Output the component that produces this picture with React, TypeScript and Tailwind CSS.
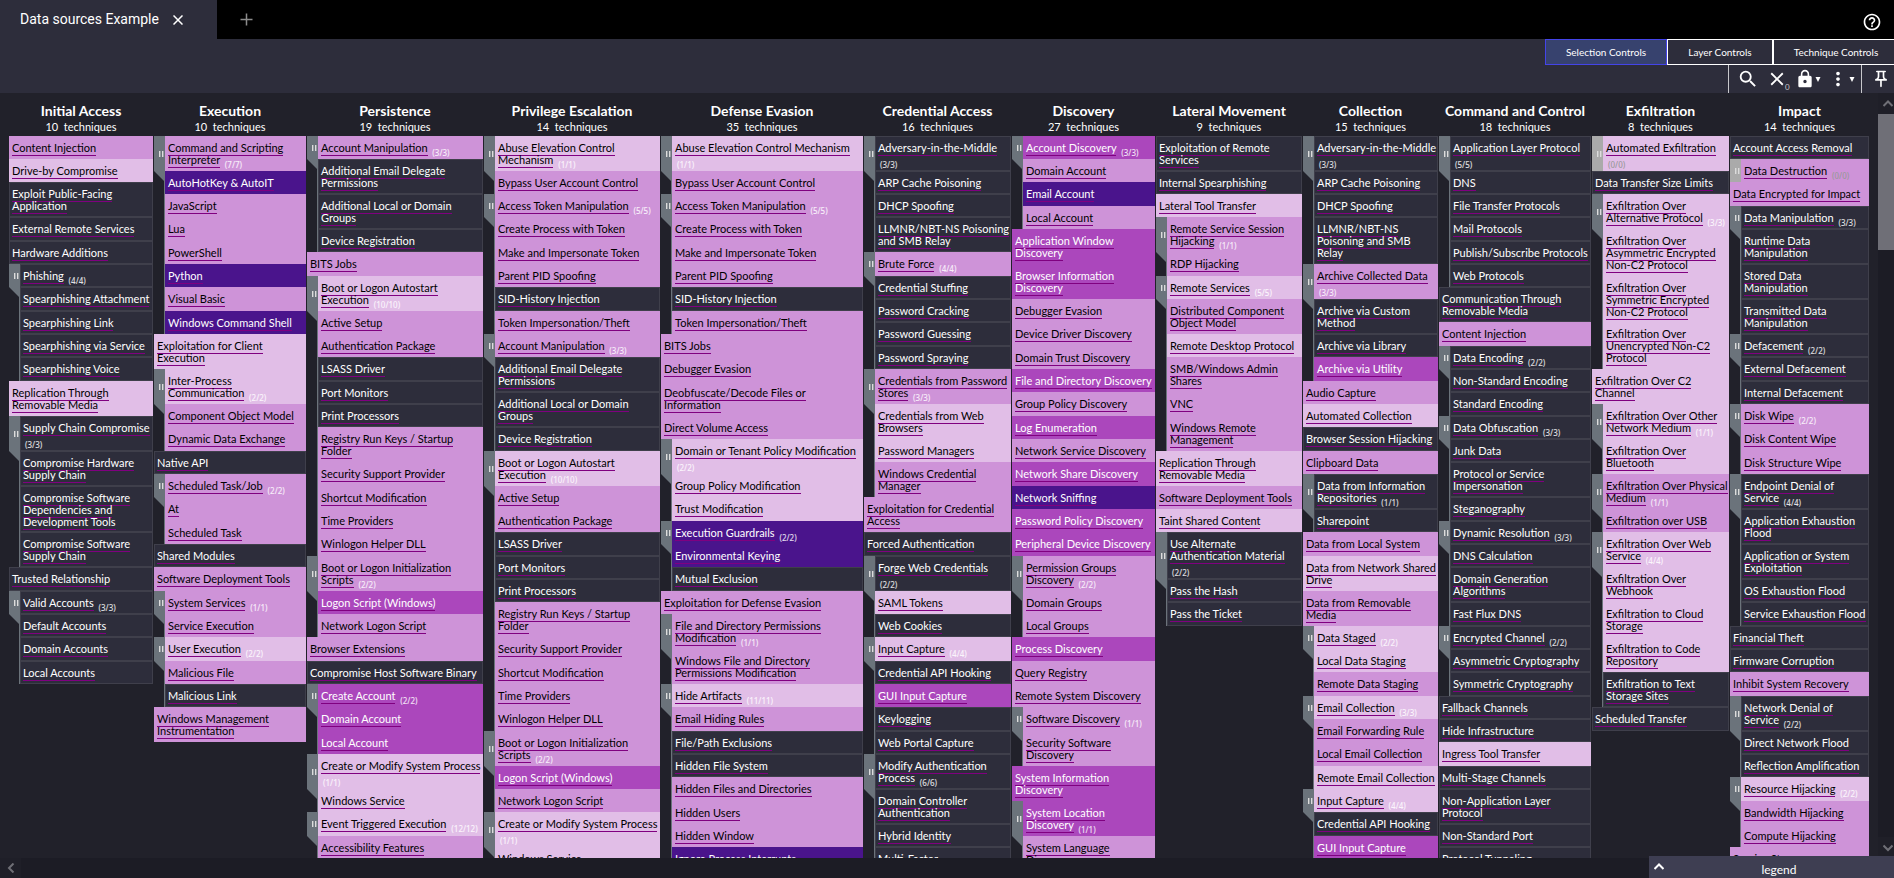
import React from "react";

type Level = "none" | "light" | "medium" | "strong" | "deep";

interface Technique {
  level: Level;
  lines: string[];
  count?: string;
  subs: Technique[];
}

interface Tactic {
  name: string;
  total: number;
  width: string;
  techniques: Technique[];
}

const LEVELS: Record<string, Level> = { n: "none", l: "light", m: "medium", s: "strong", d: "deep" };

/* One technique per row: a level letter, the name with "|" for a line break,
   and "#" before the sub-technique count. Rows that start with "-" are
   sub-techniques of the row above. */
function parse(source: string): Technique[] {
  const result: Technique[] = [];
  source
    .trim()
    .split("\n")
    .forEach((raw) => {
      const row = raw.trim();
      const isSub = row.startsWith("-");
      const body = isSub ? row.slice(1) : row;
      const [label, count] = body.slice(2).split("#");
      const technique: Technique = {
        level: LEVELS[body[0]],
        lines: label.split("|"),
        count,
        subs: [],
      };
      if (isSub) result[result.length - 1].subs.push(technique);
      else result.push(technique);
    });
  return result;
}

const AUTOSTART = `
l Boot or Logon Autostart|Execution#10/10
-m Active Setup
-m Authentication Package
-n LSASS Driver
-n Port Monitors
-n Print Processors
-m Registry Run Keys / Startup|Folder
-m Security Support Provider
-m Shortcut Modification
-m Time Providers
-m Winlogon Helper DLL
m Boot or Logon Initialization|Scripts#2/2
-s Logon Script (Windows)
-m Network Logon Script`;

const ACCOUNT_MANIPULATION = `
m Account Manipulation#3/3
-n Additional Email Delegate|Permissions
-n Additional Local or Domain|Groups
-n Device Registration`;

const ACCESS_TOKEN = `
m Access Token Manipulation#5/5
-m Create Process with Token
-m Make and Impersonate Token
-m Parent PID Spoofing
-n SID-History Injection
-m Token Impersonation/Theft`;

const TACTICS: Tactic[] = [
  {
    name: "Initial Access",
    total: 10,
    width: "flex-[144_0_144px]",
    techniques: parse(`
m Content Injection
l Drive-by Compromise
n Exploit Public-Facing|Application
n External Remote Services
n Hardware Additions
n Phishing#4/4
-n Spearphishing Attachment
-n Spearphishing Link
-n Spearphishing via Service
-n Spearphishing Voice
l Replication Through|Removable Media
n Supply Chain Compromise|#3/3
-n Compromise Hardware|Supply Chain
-n Compromise Software|Dependencies and|Development Tools
-n Compromise Software|Supply Chain
n Trusted Relationship
n Valid Accounts#3/3
-n Default Accounts
-n Domain Accounts
-n Local Accounts`),
  },
  {
    name: "Execution",
    total: 10,
    width: "flex-[152_0_152px]",
    techniques: parse(`
m Command and Scripting|Interpreter#7/7
-d AutoHotKey & AutoIT
-m JavaScript
-m Lua
-m PowerShell
-d Python
-m Visual Basic
-d Windows Command Shell
l Exploitation for Client|Execution
l Inter-Process|Communication#2/2
-m Component Object Model
-m Dynamic Data Exchange
n Native API
m Scheduled Task/Job#2/2
-m At
-m Scheduled Task
n Shared Modules
m Software Deployment Tools
m System Services#1/1
-m Service Execution
l User Execution#2/2
-m Malicious File
-n Malicious Link
m Windows Management|Instrumentation`),
  },
  {
    name: "Persistence",
    total: 19,
    width: "flex-[176_0_176px]",
    techniques: parse(`${ACCOUNT_MANIPULATION}
m BITS Jobs${AUTOSTART}
m Browser Extensions
n Compromise Host Software Binary
s Create Account#2/2
-s Domain Account
-s Local Account
l Create or Modify System Process|#1/1
-l Windows Service
l Event Triggered Execution#12/12
-m Accessibility Features`),
  },
  {
    name: "Privilege Escalation",
    total: 14,
    width: "flex-[176_0_176px]",
    techniques: parse(`
l Abuse Elevation Control|Mechanism#1/1
-m Bypass User Account Control${ACCESS_TOKEN}${ACCOUNT_MANIPULATION}${AUTOSTART}
l Create or Modify System Process|#1/1
-l Windows Service`),
  },
  {
    name: "Defense Evasion",
    total: 35,
    width: "flex-[202_0_202px]",
    techniques: parse(`
l Abuse Elevation Control Mechanism|#1/1
-m Bypass User Account Control${ACCESS_TOKEN}
m BITS Jobs
m Debugger Evasion
m Deobfuscate/Decode Files or|Information
m Direct Volume Access
l Domain or Tenant Policy Modification|#2/2
-l Group Policy Modification
-l Trust Modification
d Execution Guardrails#2/2
-d Environmental Keying
-n Mutual Exclusion
m Exploitation for Defense Evasion
m File and Directory Permissions|Modification#1/1
-m Windows File and Directory|Permissions Modification
l Hide Artifacts#11/11
-m Email Hiding Rules
-n File/Path Exclusions
-n Hidden File System
-m Hidden Files and Directories
-m Hidden Users
-m Hidden Window
-d Ignore Process Interrupts`),
  },
  {
    name: "Credential Access",
    total: 16,
    width: "flex-[147_0_147px]",
    techniques: parse(`
n Adversary-in-the-Middle|#3/3
-n ARP Cache Poisoning
-n DHCP Spoofing
-n LLMNR/NBT-NS Poisoning|and SMB Relay
m Brute Force#4/4
-n Credential Stuffing
-n Password Cracking
-n Password Guessing
-n Password Spraying
m Credentials from Password|Stores#3/3
-l Credentials from Web|Browsers
-l Password Managers
-m Windows Credential|Manager
m Exploitation for Credential|Access
n Forced Authentication
n Forge Web Credentials|#2/2
-l SAML Tokens
-n Web Cookies
l Input Capture#4/4
-n Credential API Hooking
-s GUI Input Capture
-n Keylogging
-n Web Portal Capture
n Modify Authentication|Process#6/6
-n Domain Controller|Authentication
-n Hybrid Identity
-n Multi-Factor|Authentication`),
  },
  {
    name: "Discovery",
    total: 27,
    width: "flex-[143_0_143px]",
    techniques: parse(`
s Account Discovery#3/3
-m Domain Account
-d Email Account
-m Local Account
s Application Window|Discovery
s Browser Information|Discovery
m Debugger Evasion
m Device Driver Discovery
m Domain Trust Discovery
s File and Directory Discovery
m Group Policy Discovery
s Log Enumeration
m Network Service Discovery
s Network Share Discovery
d Network Sniffing
s Password Policy Discovery
s Peripheral Device Discovery
m Permission Groups|Discovery#2/2
-m Domain Groups
-m Local Groups
s Process Discovery
m Query Registry
m Remote System Discovery
m Software Discovery#1/1
-m Security Software|Discovery
s System Information|Discovery
s System Location|Discovery#1/1
-m System Language|Discovery`),
  },
  {
    name: "Lateral Movement",
    total: 9,
    width: "flex-[146_0_146px]",
    techniques: parse(`
n Exploitation of Remote|Services
n Internal Spearphishing
l Lateral Tool Transfer
m Remote Service Session|Hijacking#1/1
-m RDP Hijacking
l Remote Services#5/5
-m Distributed Component|Object Model
-l Remote Desktop Protocol
-m SMB/Windows Admin|Shares
-m VNC
-m Windows Remote|Management
l Replication Through|Removable Media
m Software Deployment Tools
l Taint Shared Content
n Use Alternate|Authentication Material|#2/2
-n Pass the Hash
-n Pass the Ticket`),
  },
  {
    name: "Collection",
    total: 15,
    width: "flex-[135_0_135px]",
    techniques: parse(`
n Adversary-in-the-Middle|#3/3
-n ARP Cache Poisoning
-n DHCP Spoofing
-n LLMNR/NBT-NS|Poisoning and SMB|Relay
m Archive Collected Data|#3/3
-n Archive via Custom|Method
-n Archive via Library
-s Archive via Utility
m Audio Capture
l Automated Collection
n Browser Session Hijacking
m Clipboard Data
n Data from Information|Repositories#1/1
-n Sharepoint
m Data from Local System
l Data from Network Shared|Drive
m Data from Removable|Media
l Data Staged#2/2
-l Local Data Staging
-m Remote Data Staging
l Email Collection#3/3
-m Email Forwarding Rule
-m Local Email Collection
-l Remote Email Collection
l Input Capture#4/4
-n Credential API Hooking
-s GUI Input Capture`),
  },
  {
    name: "Command and Control",
    total: 18,
    width: "flex-[152_0_152px]",
    techniques: parse(`
n Application Layer Protocol|#5/5
-n DNS
-n File Transfer Protocols
-n Mail Protocols
-n Publish/Subscribe Protocols
-n Web Protocols
n Communication Through|Removable Media
m Content Injection
n Data Encoding#2/2
-n Non-Standard Encoding
-n Standard Encoding
n Data Obfuscation#3/3
-n Junk Data
-n Protocol or Service|Impersonation
-n Steganography
n Dynamic Resolution#3/3
-n DNS Calculation
-n Domain Generation|Algorithms
-n Fast Flux DNS
n Encrypted Channel#2/2
-n Asymmetric Cryptography
-n Symmetric Cryptography
n Fallback Channels
n Hide Infrastructure
l Ingress Tool Transfer
n Multi-Stage Channels
n Non-Application Layer|Protocol
n Non-Standard Port
n Protocol Tunneling`),
  },
  {
    name: "Exfiltration",
    total: 8,
    width: "flex-[137_0_137px]",
    techniques: parse(`
l Automated Exfiltration|#0/0
n Data Transfer Size Limits
l Exfiltration Over|Alternative Protocol#3/3
-l Exfiltration Over|Asymmetric Encrypted|Non-C2 Protocol
-l Exfiltration Over|Symmetric Encrypted|Non-C2 Protocol
-l Exfiltration Over|Unencrypted Non-C2|Protocol
l Exfiltration Over C2|Channel
l Exfiltration Over Other|Network Medium#1/1
-l Exfiltration Over|Bluetooth
m Exfiltration Over Physical|Medium#1/1
-m Exfiltration over USB
l Exfiltration Over Web|Service#4/4
-l Exfiltration Over|Webhook
-l Exfiltration to Cloud|Storage
-l Exfiltration to Code|Repository
-n Exfiltration to Text|Storage Sites
n Scheduled Transfer`),
  },
  {
    name: "Impact",
    total: 14,
    width: "flex-[139_0_139px]",
    techniques: parse(`
n Account Access Removal
m Data Destruction#0/0
m Data Encrypted for Impact
n Data Manipulation#3/3
-n Runtime Data|Manipulation
-n Stored Data|Manipulation
-n Transmitted Data|Manipulation
n Defacement#2/2
-n External Defacement
-n Internal Defacement
m Disk Wipe#2/2
-m Disk Content Wipe
-m Disk Structure Wipe
n Endpoint Denial of|Service#4/4
-n Application Exhaustion|Flood
-n Application or System|Exploitation
-n OS Exhaustion Flood
-n Service Exhaustion Flood
n Financial Theft
n Firmware Corruption
m Inhibit System Recovery
n Network Denial of|Service#2/2
-n Direct Network Flood
-n Reflection Amplification
l Resource Hijacking#2/2
-m Bandwidth Hijacking
-m Compute Hijacking
m Service Stop`),
  },
];

const CELL: Record<Level, string> = {
  none: "border-[#3f3f4b] bg-[#2d2d3b] text-white",
  light: "border-[#e1bee7] bg-[#e1bee7] text-black",
  medium: "border-[#ce93d8] bg-[#ce93d8] text-black",
  strong: "border-[#ab47bc] bg-[#ab47bc] text-white",
  deep: "border-[#4a148c] bg-[#4a148c] text-white",
};

/* Rows sit on a rhythm in which three half-rows measure 35px. */
const rhythm = (units: number) => Math.floor((units * 35) / 3);

function Cell({ technique, start }: { technique: Technique; start: number }) {
  const { level, lines, count } = technique;
  const minHeight = rhythm(start + lines.length + 1) - rhythm(start);
  return (
    <div
      className={`border px-[2px] pt-[5px] pb-[3px] text-[11px] leading-[12px] whitespace-nowrap ${CELL[level]}`}
      style={{ minHeight }}
    >
      <a href="#technique">
        {lines.map((line, i) => (
          <React.Fragment key={i}>
            {i > 0 && <br />}
            {line && <span className="border-b border-[#800080] pb-px">{line}</span>}
          </React.Fragment>
        ))}
      </a>
      {count && (
        <>
          {" "}
          <span
            className={`ml-[2px] align-[-4px] font-['Noto_Sans',sans-serif] text-[8px] leading-[0] font-medium ${
              count === "0/0" ? "text-[#999999]" : "text-white/85"
            }`}
          >
            ({count})
          </span>
        </>
      )}
    </div>
  );
}

function Group({ technique, start }: { technique: Technique; start: number }) {
  const empty = technique.count === "0/0";
  let offset = start + technique.lines.length + 1;
  return (
    <div className="grid grid-cols-[11px_minmax(0,1fr)]">
      <button
        type="button"
        aria-label="Toggle sub-techniques"
        className={`flex items-center justify-end pr-[1px] ${empty ? "bg-[#aaaaaa]" : "bg-[#6b737b]"}`}
      >
        <svg width="5" height="6" viewBox="0 0 5 6" fill="#dcdcdc">
          <rect x="0" y="0" width="1.4" height="6" />
          <rect x="3" y="0" width="1.4" height="6" />
        </svg>
      </button>
      <Cell technique={technique} start={start} />
      {technique.subs.length > 0 && (
        <>
          <div className="border-r border-[#6b737b]">
            <div className="h-[10px] bg-[#6b737b] [clip-path:polygon(0_0,100%_0,100%_100%)]" />
          </div>
          <div className="flex flex-col">
            {technique.subs.map((sub, i) => {
              const at = offset;
              offset += sub.lines.length + 1;
              return <Cell key={i} technique={sub} start={at} />;
            })}
          </div>
        </>
      )}
    </div>
  );
}

function Column({ tactic }: { tactic: Tactic }) {
  let offset = 0;
  return (
    <section className={`flex min-w-0 flex-col ${tactic.width}`}>
      <header className="flex h-[43px] flex-col items-center pt-[9px] whitespace-nowrap text-white">
        <h2 className="text-[14px] leading-[18px] font-bold">{tactic.name}</h2>
        <p className="text-[11px] leading-[14px] whitespace-pre">{`${tactic.total}  techniques`}</p>
      </header>
      {tactic.techniques.map((technique, i) => {
        const at = offset;
        offset += [technique, ...technique.subs].reduce((sum, t) => sum + t.lines.length + 1, 0);
        return technique.count ? (
          <Group key={i} technique={technique} start={at} />
        ) : (
          <Cell key={i} technique={technique} start={at} />
        );
      })}
    </section>
  );
}

function Chevron({ d }: { d: string }) {
  return (
    <svg width="10" height="10" viewBox="0 0 10 10" fill="none" stroke="currentColor" strokeWidth="2">
      <path d={d} />
    </svg>
  );
}

function Caret() {
  return (
    <svg width="6" height="5" viewBox="0 0 6 5" fill="currentColor" className="shrink-0">
      <path d="M0.500 0h5L3 5z" />
    </svg>
  );
}

function Toolbar() {
  return (
    <div className="flex h-[54px] shrink-0 flex-col items-end bg-[#2d2d3b] text-white">
      <div className="flex h-[26px] text-[10px]">
        <button type="button" className="w-[122px] border border-[#4444e8] bg-[#37426e]">
          Selection Controls
        </button>
        <button type="button" className="w-[106px] border border-white">
          Layer Controls
        </button>
        <button type="button" className="w-[121px] border border-r-0 border-white pl-[4px]">
          Technique Controls
        </button>
      </div>
      <div className="flex h-[28px] items-center">
        <div className="flex h-full items-center border-l border-[#c8c8cc] pl-[8px]">
          <button type="button" aria-label="Search" className="w-[22px]">
            <svg width="22" height="22" viewBox="0 0 24 24" fill="currentColor">
              <path d="M15.500 14h-.790l-.280-.270A6.471 6.471 0 0 0 16 9.500 6.500 6.500 0 1 0 9.500 16c1.610 0 3.090-.590 4.230-1.570l.270.280v.790l5 4.990L20.490 19l-4.990-5zm-6 0C7.010 14 5 11.990 5 9.500S7.010 5 9.500 5 14 7.010 14 9.500 11.990 14 9.500 14z" />
            </svg>
          </button>
          <button type="button" aria-label="Deselect" className="ml-[7px] flex w-[22px] items-end">
            <svg width="22" height="22" viewBox="0 0 24 24" fill="currentColor" className="shrink-0">
              <path d="M19 6.410L17.590 5 12 10.590 6.410 5 5 6.410 10.590 12 5 17.590 6.410 19 12 13.410 17.590 19 19 17.590 13.410 12z" />
            </svg>
            <span className="-ml-[3px] text-[8px] leading-[5px] text-[#c8c8cc]">0</span>
          </button>
          <button type="button" aria-label="Lock" className="ml-[7px] flex w-[25px] items-center">
            <svg width="20" height="20" viewBox="0 0 24 24" fill="currentColor" className="shrink-0">
              <path d="M18 8h-1V6c0-2.760-2.240-5-5-5S7 3.240 7 6v2H6c-1.100 0-2 .9-2 2v10c0 1.100.9 2 2 2h12c1.100 0 2-.9 2-2V10c0-1.100-.9-2-2-2zm-6 9c-1.100 0-2-.9-2-2s.9-2 2-2 2 .9 2 2-.9 2-2 2zm3.100-9H8.900V6c0-1.710 1.390-3.100 3.100-3.100 1.710 0 3.100 1.390 3.100 3.100v2z" />
            </svg>
            <Caret />
          </button>
          <button type="button" aria-label="More" className="ml-[7px] flex w-[29px] items-center">
            <svg width="22" height="22" viewBox="0 0 24 24" fill="currentColor" className="shrink-0">
              <path d="M12 8c1.100 0 2-.9 2-2s-.9-2-2-2-2 .9-2 2 .9 2 2 2zm0 2c-1.100 0-2 .9-2 2s.9 2 2 2 2-.9 2-2-.9-2-2-2zm0 6c-1.100 0-2 .9-2 2s.9 2 2 2 2-.9 2-2-.9-2-2-2z" />
            </svg>
            <Caret />
          </button>
        </div>
        <div className="ml-[5px] flex h-full items-center border-l border-[#c8c8cc] pr-[3px] pl-[9px]">
          <button type="button" aria-label="Pin" className="w-[20px]">
            <svg width="20" height="20" viewBox="0 0 24 24" fill="currentColor">
              <path d="M14 4v5c0 1.120.370 2.160 1 3H9c.650-.860 1-1.900 1-3V4h4m3-2H7c-.550 0-1 .450-1 1s.450 1 1 1h1v5c0 1.660-1.340 3-3 3v2h5.970v7l1 1 1-1v-7H19v-2c-1.660 0-3-1.340-3-3V4h1c.550 0 1-.450 1-1s-.450-1-1-1z" />
            </svg>
          </button>
        </div>
      </div>
    </div>
  );
}

export default function App() {
  return (
    <div className="relative flex h-screen flex-col overflow-hidden bg-[#21212a] font-['Lato','Noto_Sans',sans-serif]">
      <nav className="flex h-[39px] shrink-0 items-stretch bg-black text-white">
        <div className="flex w-[217px] items-center bg-[#2d2d3b] pl-5">
          <button
            type="button"
            className="pb-[2px] font-['Roboto','Liberation_Sans',sans-serif] text-[14px] leading-[18px]"
          >
            Data sources Example
          </button>
          <button type="button" aria-label="Close tab" className="ml-[14px]">
            <svg width="10" height="10" viewBox="0 0 10 10" fill="none" stroke="currentColor" strokeWidth="1.500">
              <path d="M0.500 0.500l9 9M9.500 0.500l-9 9" />
            </svg>
          </button>
        </div>
        <button type="button" aria-label="New tab" className="ml-[23px] text-[#8c8c8c]">
          <svg width="13" height="13" viewBox="0 0 13 13" stroke="currentColor" strokeWidth="1.500">
            <path d="M6.500 0.500v12M0.500 6.500h12" />
          </svg>
        </button>
        <button type="button" aria-label="Help" className="mt-[5px] mr-[12px] ml-auto">
          <svg width="20" height="20" viewBox="0 0 24 24" fill="currentColor">
            <path d="M11 18h2v-2h-2v2zm1-16C6.480 2 2 6.480 2 12s4.480 10 10 10 10-4.480 10-10S17.520 2 12 2zm0 18c-4.410 0-8-3.590-8-8s3.590-8 8-8 8 3.590 8 8-3.590 8-8 8zm0-14c-2.210 0-4 1.790-4 4h2c0-1.100.9-2 2-2s2 .9 2 2c0 2-3 1.750-3 5h2c0-2.250 3-2.500 3-5 0-2.210-1.790-4-4-4z" />
          </svg>
        </button>
      </nav>
      <Toolbar />
      <div className="flex min-h-0 flex-1">
        <main className="flex min-w-0 flex-1 items-start gap-px overflow-hidden px-[9px]">
          {TACTICS.map((tactic) => (
            <Column key={tactic.name} tactic={tactic} />
          ))}
        </main>
        <div className="flex w-4 shrink-0 flex-col items-end bg-[#1c1c25] text-[#6f6f76]">
          <div className="flex h-[21px] w-full items-center justify-end bg-[#1f1f28] pr-px">
            <Chevron d="M0.500 7L5 2.500l4.500 4.500" />
          </div>
          <div className="h-[136px] w-full bg-[#6f6f77]" />
          <div className="mt-auto flex h-[21px] w-full items-center justify-end bg-[#1f1f28] pr-px">
            <Chevron d="M0.500 2.500L5 7l4.500-4.500" />
          </div>
        </div>
      </div>
      <div className="flex h-[20px] shrink-0 items-center bg-[#1c1c25] text-[#6f6f76]">
        <div className="flex h-full w-[21px] items-center justify-center bg-[#1f1f28]">
          <Chevron d="M7.500 0.500L3 5l4.500 4.500" />
        </div>
      </div>
      <button
        type="button"
        className="absolute right-0 bottom-0 flex h-[22px] w-[245px] items-center bg-[#3e3e52] pl-[5px] text-white"
      >
        <Chevron d="M0.500 7L5 2.500l4.500 4.500" />
        <span className="flex-1 pt-[6px] text-center text-[12px] leading-[16px]">legend</span>
      </button>
    </div>
  );
}
